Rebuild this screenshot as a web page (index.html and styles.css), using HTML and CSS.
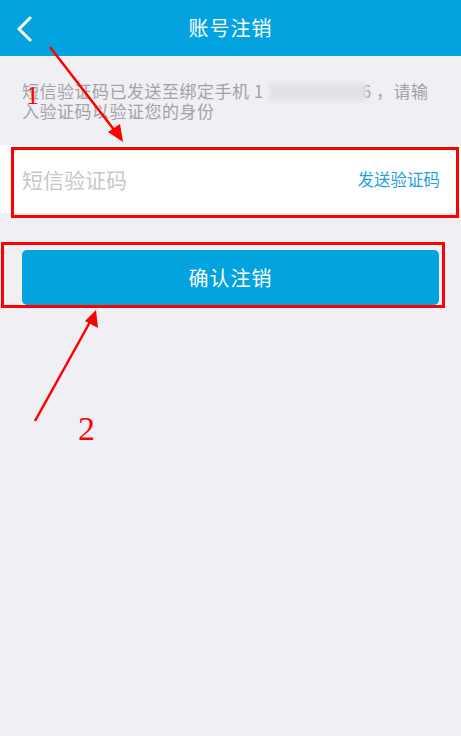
FILE: index.html
```html
<!DOCTYPE html>
<html lang="zh-CN">
<head>
<meta charset="utf-8">
<title>账号注销</title>
<link rel="stylesheet" href="styles.css">
</head>
<body>
<div class="page">
  <header class="topbar">
    <span class="back">
      <svg width="18" height="26" viewBox="0 0 18 26"><path d="M14 2 L3 13 L14 24" fill="none" stroke="#fff" stroke-width="3" stroke-linecap="round" stroke-linejoin="round"/></svg>
    </span>
    <h1 class="title">账号注销</h1>
  </header>

  <p class="desc">短信验证码已发送至绑定手机 1<span class="mask"></span>6 ，请输<br>入验证码以验证您的身份</p>

  <div class="code-row">
    <span class="placeholder">短信验证码</span>
    <span class="send">发送验证码</span>
  </div>

  <div class="btn-wrap">
    <button class="confirm">确认注销</button>
  </div>

  <svg class="annot" width="461" height="736" viewBox="0 0 461 736">
    <rect x="12.5" y="148.5" width="445" height="68" fill="none" stroke="#ff0000" stroke-width="3"/>
    <rect x="2.5" y="243.5" width="441" height="63" fill="none" stroke="#ff0000" stroke-width="3"/>
    <line x1="50" y1="47" x2="115" y2="131" stroke="#ff0000" stroke-width="2.5"/>
    <polygon points="123,142 108,132 120,124" fill="#ff0000"/>
    <line x1="35" y1="421" x2="90" y2="322" stroke="#ff0000" stroke-width="2.5"/>
    <polygon points="96,310 98,328 85,321" fill="#ff0000"/>
    <text x="26" y="104" class="num num1">1</text>
    <text x="78" y="440" class="num num2">2</text>
  </svg>
</div>
</body>
</html>
```

FILE: styles.css
```css
html, body {
  margin: 0;
  padding: 0;
}
body {
  background: #efeff4;
  font-family: "Noto Sans CJK SC", "Noto Sans", sans-serif;
}
.page {
  position: relative;
  width: 461px;
  height: 736px;
  overflow: hidden;
}
.topbar {
  height: 56px;
  background: #03a3df;
  display: flex;
  align-items: center;
  justify-content: center;
  position: relative;
}
.back {
  position: absolute;
  left: 16px;
  top: 16px;
  width: 18px;
  height: 26px;
}
.back svg { display: block; }
.title {
  margin: 0;
  color: #fff;
  font-size: 20px;
  font-weight: normal;
  line-height: 24px;
  letter-spacing: 1px;
}
.desc {
  margin: 25px 0 0 0;
  padding: 0 22px;
  color: #a3a3a6;
  font-size: 17px;
  line-height: 19px;
  letter-spacing: 0.5px;
}
.mask {
  display: inline-block;
  width: 96px;
  height: 18px;
  margin: 0 -4px 0 6px;
  vertical-align: -3px;
  background: #e2e2e6;
  filter: blur(2px);
}
.code-row {
  margin-top: 25px;
  height: 68px;
  background: #fff;
  display: flex;
  align-items: center;
  justify-content: space-between;
  padding: 0 21px 0 22px;
}
.placeholder {
  color: #c7c7cc;
  font-size: 21px;
}
.send {
  color: #1f9fe0;
  font-size: 16.5px;
}
.btn-wrap {
  margin-top: 37px;
  padding: 0 22px;
}
.confirm {
  display: block;
  width: 100%;
  height: 55px;
  border: 0;
  border-radius: 5px;
  background: #03a3df;
  color: #fff;
  font-family: "Noto Sans CJK SC", "Noto Sans", sans-serif;
  font-size: 20px;
  letter-spacing: 1px;
  padding: 0;
}
.annot {
  position: absolute;
  left: 0;
  top: 0;
  pointer-events: none;
}
.num {
  fill: #ff0000;
  font-family: "Liberation Serif", "DejaVu Serif", serif;
}
.num1 { font-size: 26px; }
.num2 { font-size: 34px; }
```
